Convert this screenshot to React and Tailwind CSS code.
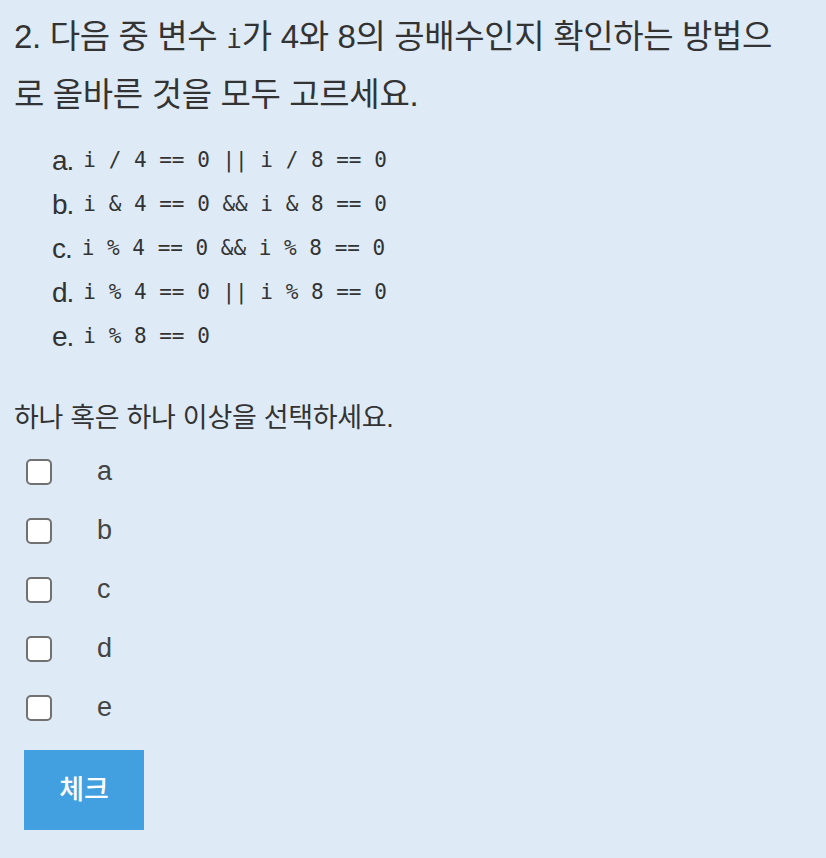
export default function App() {
  const opts = [
    ["a.", "i / 4 == 0 || i / 8 == 0"],
    ["b.", "i & 4 == 0 && i & 8 == 0"],
    ["c.", "i % 4 == 0 && i % 8 == 0"],
    ["d.", "i % 4 == 0 || i % 8 == 0"],
    ["e.", "i % 8 == 0"],
  ];
  return (
    <div className="w-[826px] h-[858px] bg-[#deebf7] text-[#333333] overflow-hidden font-[family-name:'Liberation_Sans','Noto_Sans_CJK_KR',sans-serif]">
      <div className="pl-[14px] pr-[45px] pt-[9px] text-[33px] leading-[56px] tracking-[-0.35px]">
        2. 다음 중 변수 <code className="font-[family-name:'DejaVu_Sans_Mono',monospace] text-[26px] tracking-normal">i</code>가 4와 8의 공배수인지 확인하는 방법으로 올바른 것을 모두 고르세요.
      </div>
      <div className="pl-[52px] pt-[16px] flex flex-col">
        {opts.map(([l, c]) => (
          <div key={l} className="h-[44px] flex items-center text-[28px]">
            <span className="tracking-[-1px]">{l}</span>
            <code className="ml-[10px] font-[family-name:'DejaVu_Sans_Mono',monospace] text-[21px] text-[#333333]">{c}</code>
          </div>
        ))}
      </div>
      <div className="pl-[14px] pt-[41px] text-[27px] leading-[36px] tracking-[-0.3px]">하나 혹은 하나 이상을 선택하세요.</div>
      <div className="pt-[6px] flex flex-col">
        {["a", "b", "c", "d", "e"].map((l) => (
          <label key={l} className="h-[59px] flex items-center">
            <span className="ml-[26px] w-[26px] h-[26px] rounded-[5px] border-2 border-[#717171] bg-white" />
            <span className="ml-[45px] text-[27px] text-[#444444]">{l}</span>
          </label>
        ))}
      </div>
      <button className="ml-[24px] mt-[13px] w-[120px] h-[80px] bg-[#42a0e0] text-white text-[27px] font-medium">체크</button>
    </div>
  );
}
